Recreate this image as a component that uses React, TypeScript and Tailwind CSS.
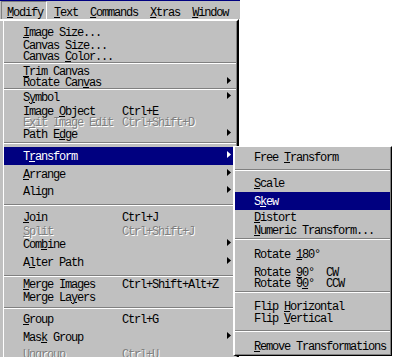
import React from "react";

type Item = {
  label: string;
  u?: number;
  keys?: string;
  sub?: boolean;
  dis?: boolean;
  hi?: boolean;
  h: number;
  pt: number;
};

type Group = { pt?: number; items: Item[] };

const mainGroups: Group[] = [
  {
    items: [
      { label: "Image Size...", u: 0, h: 17, pt: 6 },
      { label: "Canvas Size...", h: 11, pt: 2 },
      { label: "Canvas Color...", u: 7, h: 13, pt: 2 },
    ],
  },
  {
    items: [
      { label: "Trim Canvas", u: 0, h: 11, pt: 2 },
      { label: "Rotate Canvas", u: 10, sub: true, h: 13, pt: 2 },
    ],
  },
  {
    items: [
      { label: "Symbol", u: 1, sub: true, h: 14, pt: 2 },
      { label: "Image Object", u: 6, keys: "Ctrl+E", h: 11, pt: 2 },
      { label: "Exit Image Edit", u: 1, keys: "Ctrl+Shift+D", dis: true, h: 12, pt: 2 },
      { label: "Path Edge", u: 6, sub: true, h: 15, pt: 2 },
    ],
  },
  {
    pt: 3,
    items: [
      { label: "Transform", u: 1, sub: true, hi: true, h: 18, pt: 4 },
      { label: "Arrange", u: 0, sub: true, h: 17, pt: 4 },
      { label: "Align", u: 3, sub: true, h: 22, pt: 4 },
    ],
  },
  {
    items: [
      { label: "Join", u: 0, keys: "Ctrl+J", h: 18, pt: 6 },
      { label: "Split", u: 0, keys: "Ctrl+Shift+J", dis: true, h: 13, pt: 2 },
      { label: "Combine", u: 3, sub: true, h: 18, pt: 2 },
      { label: "Alter Path", u: 1, sub: true, h: 20, pt: 2 },
    ],
  },
  {
    items: [
      { label: "Merge Images", u: 0, keys: "Ctrl+Shift+Alt+Z", h: 13, pt: 2 },
      { label: "Merge Layers", u: 8, h: 17, pt: 2 },
    ],
  },
  {
    items: [
      { label: "Group", u: 0, keys: "Ctrl+G", h: 21, pt: 5 },
      { label: "Mask Group", u: 3, sub: true, h: 17, pt: 2 },
      { label: "Ungroup", u: 0, keys: "Ctrl+U", dis: true, h: 18, pt: 2 },
    ],
  },
];

const subGroups: Group[] = [
  { items: [{ label: "Free Transform", u: 5, h: 22, pt: 5 }] },
  {
    items: [
      { label: "Scale", u: 0, h: 21, pt: 7 },
      { label: "Skew", u: 1, hi: true, h: 18, pt: 4 },
      { label: "Distort", u: 0, h: 13, pt: 2 },
      { label: "Numeric Transform...", u: 0, h: 15, pt: 2 },
    ],
  },
  {
    items: [
      { label: "Rotate 180°", u: 7, h: 25, pt: 9 },
      { label: "Rotate 90°  CW", u: 7, h: 11, pt: 2 },
      { label: "Rotate 90°  CCW", u: 8, h: 15, pt: 2 },
    ],
  },
  {
    items: [
      { label: "Flip Horizontal", u: 5, h: 18, pt: 8 },
      { label: "Flip Vertical", u: 5, h: 19, pt: 2 },
    ],
  },
  { items: [{ label: "Remove Transformations", u: 0, h: 22, pt: 9 }] },
];

const font =
  "font-['Liberation_Mono',monospace] text-[12px] leading-[12px] tracking-[-1.2px] whitespace-pre";

function Label({ text, u }: { text: string; u?: number }) {
  if (u === undefined) return <>{text}</>;
  return (
    <>
      {text.slice(0, u)}
      <span className="underline decoration-1 underline-offset-[1px]">{text[u]}</span>
      {text.slice(u + 1)}
    </>
  );
}

function Arrow({ white }: { white?: boolean }) {
  return (
    <svg width="4" height="7" viewBox="0 0 4 7" className="ml-auto mr-[5px] shrink-0">
      <polygon points="0,0 4,3.5 0,7" fill={white ? "#ffffff" : "#000000"} />
    </svg>
  );
}

function Sep() {
  return <div className="h-[2px] border-t border-t-[#808080] border-b border-b-white" />;
}

function Row({ item, labelW }: { item: Item; labelW?: number }) {
  const color = item.hi
    ? "bg-[#000080] text-white"
    : item.dis
    ? "text-[#808080] [text-shadow:1px_1px_0_#ffffff]"
    : "text-black";
  return (
    <div
      className={`flex items-start pl-[19px] ${color}`}
      style={{ height: item.h, paddingTop: item.pt }}
    >
      <span className="shrink-0" style={labelW ? { width: labelW } : undefined}>
        <Label text={item.label} u={item.u} />
      </span>
      {item.keys && <span>{item.keys}</span>}
      {item.sub && <Arrow white={item.hi} />}
    </div>
  );
}

function Groups({ groups, labelW }: { groups: Group[]; labelW?: number }) {
  return (
    <>
      {groups.map((g, gi) => (
        <React.Fragment key={gi}>
          {gi > 0 && <Sep />}
          <div style={{ paddingTop: g.pt ?? 0 }}>
            {g.items.map((it) => (
              <Row key={it.label} item={it} labelW={labelW} />
            ))}
          </div>
        </React.Fragment>
      ))}
    </>
  );
}

function MenuBar() {
  return (
    <div className={`w-[240px] h-[19px] bg-[#c0c0c0] border-t border-t-[#000080] flex items-start pl-[1px] text-black ${font}`}>
      <div className="h-[18px] border-l border-t border-l-[#808080] border-t-[#808080] border-r border-r-white pl-[5px] pr-[3px] pt-[5px]">
        <Label text="Modify" u={0} />
      </div>
      <div className="pl-[7px] pr-[6px] pt-[6px]">
        <Label text="Text" u={0} />
      </div>
      <div className="px-[6px] pt-[6px]">
        <Label text="Commands" u={0} />
      </div>
      <div className="px-[6px] pt-[6px]">
        <Label text="Xtras" u={0} />
      </div>
      <div className="px-[6px] pt-[6px]">
        <Label text="Window" u={0} />
      </div>
    </div>
  );
}

export default function App() {
  return (
    <div className={`relative w-[395px] h-[357px] overflow-hidden bg-white ${font}`}>
      <MenuBar />

      <div className="w-[239px] bg-[#c0c0c0] border-t-2 border-t-white border-r-2 border-r-black pl-[3px]">
        <div className="border-l border-l-white border-r border-r-[#808080]">
          <Groups groups={mainGroups} labelW={99} />
        </div>
      </div>

      <div className="absolute left-[233px] top-[146px] w-[159px] bg-[#c0c0c0] border-l-2 border-l-white border-t border-t-white border-r border-r-black border-b border-b-black">
        <div className="border-r border-r-[#808080] border-b border-b-[#808080]">
          <Groups groups={subGroups} />
        </div>
      </div>
    </div>
  );
}
